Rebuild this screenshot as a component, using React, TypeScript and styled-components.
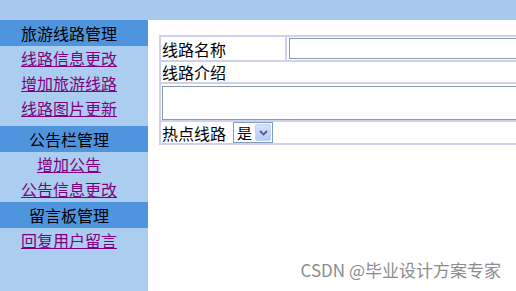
import React from 'react'
import styled, { createGlobalStyle } from 'styled-components'

const GlobalStyle = createGlobalStyle`
  html, body {
    margin: 0;
    padding: 0;
    height: 100%;
    overflow: hidden;
    background: #ffffff;
  }
  body {
    font-family: "Noto Sans CJK SC", "Liberation Sans", sans-serif;
  }
  * {
    box-sizing: border-box;
  }
`

interface MenuSection {
  title: string
  links: string[]
  spaced?: boolean
}

const menu: MenuSection[] = [
  { title: '旅游线路管理', links: ['线路信息更改', '增加旅游线路', '线路图片更新'] },
  { title: '公告栏管理', links: ['增加公告', '公告信息更改'], spaced: true },
  { title: '留言板管理', links: ['回复用户留言'] },
]

const App = () => {
  return (
    <Page>
      <GlobalStyle />
      <TopBar />
      <Body>
        <SideNav>
          {menu.map((section) => (
            <Section key={section.title} spaced={!!section.spaced}>
              <SectionTitle>{section.title}</SectionTitle>
              {section.links.map((link) => (
                <NavItem key={link}>
                  <a href="#">{link}</a>
                </NavItem>
              ))}
            </Section>
          ))}
        </SideNav>
        <Main>
          <FormTable>
            <tbody>
              <Row h={25}>
                <LabelCell>线路名称</LabelCell>
                <td>
                  <TextInput type="text" />
                </td>
              </Row>
              <Row h={20}>
                <LabelCell colSpan={2}>线路介绍</LabelCell>
              </Row>
              <Row h={38}>
                <td colSpan={2}>
                  <TextBox />
                </td>
              </Row>
              <Row h={23}>
                <LabelCell colSpan={2}>
                  <Inline>
                    热点线路
                    <Select>
                      <span>是</span>
                      <SelectArrow>
                        <svg width="9" height="6" viewBox="0 0 9 6">
                          <path d="M1 1 L4.5 4.5 L8 1" fill="none" stroke="#4d6185" strokeWidth="1.8" />
                        </svg>
                      </SelectArrow>
                    </Select>
                  </Inline>
                </LabelCell>
              </Row>
            </tbody>
          </FormTable>
        </Main>
      </Body>
      <Watermark>CSDN @毕业设计方案专家</Watermark>
    </Page>
  )
}

export default App

const Page = styled.div`
  position: relative;
  width: 516px;
  height: 291px;
  display: flex;
  flex-direction: column;
`

const TopBar = styled.div`
  height: 20px;
  background: #a8caee;
  flex-shrink: 0;
`

const Body = styled.div`
  flex: 1;
  display: flex;
`

const SideNav = styled.div`
  width: 148px;
  background: #abcdf0;
  flex-shrink: 0;
`

const Section = styled.div<{ spaced: boolean }>`
  margin-top: ${(p) => (p.spaced ? '5px' : '0')};
`

const SectionTitle = styled.div`
  height: 26px;
  line-height: 26px;
  background: #4f95dd;
  color: #000;
  font-size: 16px;
  text-align: center;
  padding-right: 10px;
`

const NavItem = styled.div`
  height: 25px;
  line-height: 25px;
  font-size: 16px;
  text-align: center;
  padding-right: 10px;

  a {
    color: #800080;
    text-decoration: underline;
  }
`

const Main = styled.div`
  flex: 1;
  background: #ffffff;
  padding: 15px 0 0 11px;
  overflow: hidden;
`

const FormTable = styled.table`
  width: 440px;
  border-collapse: collapse;
  font-size: 16px;
  color: #000;

  td {
    border: 2px solid #cfcff1;
    padding: 0;
  }
`

const Row = styled.tr<{ h: number }>`
  height: ${(p) => p.h}px;
`

const LabelCell = styled.td`
  width: 126px;
  padding-left: 1px !important;
  line-height: 20px;
  white-space: nowrap;
`

const TextInput = styled.input`
  display: block;
  margin-left: 2px;
  width: 300px;
  height: 21px;
  border: 1px solid #8a9aa6;
  outline: none;
`

const TextBox = styled.div`
  margin: 1px 0 0 1px;
  height: 34px;
  border: 1px solid #8a9aa6;
  border-right: none;
`

const Inline = styled.div`
  display: flex;
  align-items: center;
  gap: 7px;
`

const Select = styled.div`
  display: flex;
  align-items: center;
  justify-content: space-between;
  width: 40px;
  height: 21px;
  border: 1px solid #7f9db9;
  padding: 1px 1px 1px 3px;
  font-size: 15px;
  background: #fff;
`

const SelectArrow = styled.div`
  width: 16px;
  height: 17px;
  display: flex;
  align-items: center;
  justify-content: center;
  background: linear-gradient(#d5e1fc, #b6cbf7);
  border: 1px solid #c3d3fd;
  border-radius: 2px;
`

const Watermark = styled.div`
  position: absolute;
  right: 15px;
  bottom: 9px;
  font-family: "Noto Sans CJK SC", "Liberation Sans", sans-serif;
  font-size: 17px;
  color: #8c8c8c;
  text-shadow: 0 0 1px #fff;
`
